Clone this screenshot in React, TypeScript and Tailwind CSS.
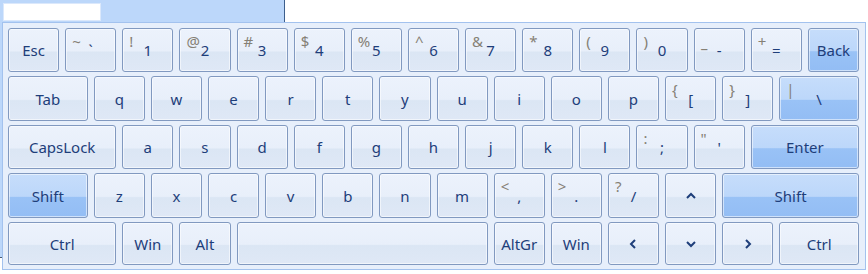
import type { ReactNode } from 'react'

type KeyDef = {
  label?: ReactNode
  shift?: string
  span?: number
  hot?: boolean
  shiftClass?: string
}

const Chevron = ({ dir }: { dir: 'up' | 'down' | 'left' | 'right' }) => {
  const paths = {
    up: 'M1 6 L5 2 L9 6',
    down: 'M1 2 L5 6 L9 2',
    left: 'M6 1 L2 5 L6 9',
    right: 'M2 1 L6 5 L2 9',
  }
  const vertical = dir === 'up' || dir === 'down'
  return (
    <svg
      width={vertical ? 10 : 8}
      height={vertical ? 8 : 10}
      viewBox={vertical ? '0 0 10 8' : '0 0 8 10'}
      fill="none"
      stroke="#1e3e7a"
      strokeWidth="2"
      strokeLinecap="butt"
      strokeLinejoin="miter"
    >
      <path d={paths[dir]} />
    </svg>
  )
}

const rows: KeyDef[][] = [
  [
    { label: 'Esc', span: 2 },
    { label: '`', shift: '~', span: 2 },
    { label: '1', shift: '!', span: 2 },
    { label: '2', shift: '@', span: 2 },
    { label: '3', shift: '#', span: 2 },
    { label: '4', shift: '$', span: 2 },
    { label: '5', shift: '%', span: 2 },
    { label: '6', shift: '^', span: 2 },
    { label: '7', shift: '&', span: 2 },
    { label: '8', shift: '*', span: 2 },
    { label: '9', shift: '(', span: 2 },
    { label: '0', shift: ')', span: 2 },
    { label: '-', shift: '–', span: 2, shiftClass: 'top-[9px]' },
    { label: '=', shift: '+', span: 2 },
    { label: 'Back', span: 2, hot: true },
  ],
  [
    { label: 'Tab', span: 3 },
    ...'qwertyuiop'.split('').map((c) => ({ label: c, span: 2 })),
    { label: '[', shift: '{', span: 2 },
    { label: ']', shift: '}', span: 2 },
    { label: '\\', shift: '|', span: 3, hot: true },
  ],
  [
    { label: 'CapsLock', span: 4 },
    ...'asdfghjkl'.split('').map((c) => ({ label: c, span: 2 })),
    { label: ';', shift: ':', span: 2 },
    { label: "'", shift: '"', span: 2 },
    { label: 'Enter', span: 4, hot: true },
  ],
  [
    { label: 'Shift', span: 3, hot: true },
    ...'zxcvbnm'.split('').map((c) => ({ label: c, span: 2 })),
    { label: ',', shift: '<', span: 2 },
    { label: '.', shift: '>', span: 2 },
    { label: '/', shift: '?', span: 2 },
    { label: <Chevron dir="up" />, span: 2 },
    { label: 'Shift', span: 5, hot: true },
  ],
  [
    { label: 'Ctrl', span: 4 },
    { label: 'Win', span: 2 },
    { label: 'Alt', span: 2 },
    { label: '', span: 9 },
    { label: 'AltGr', span: 2 },
    { label: 'Win', span: 2 },
    { label: <Chevron dir="left" />, span: 2 },
    { label: <Chevron dir="down" />, span: 2 },
    { label: <Chevron dir="right" />, span: 2 },
    { label: 'Ctrl', span: 3 },
  ],
]

const spanClass: Record<number, string> = {
  2: 'col-span-2',
  3: 'col-span-3',
  4: 'col-span-4',
  5: 'col-span-5',
  9: 'col-span-9',
}

const Key = ({ k }: { k: KeyDef }) => {
  const bg = k.hot
    ? 'bg-[linear-gradient(to_bottom,#c6ddfb_0%,#bcd7fa_52%,#99c2f6_54%,#93bdf4_100%)]'
    : 'bg-[linear-gradient(to_bottom,#ecf2fc_0%,#e8effa_52%,#dbe6f4_55%,#dfe8f6_100%)]'
  return (
    <div
      className={`relative flex items-center justify-center rounded-[3px] border border-[#8199c0] shadow-[inset_0_0_0_1px_rgba(255,255,255,0.55)] ${bg} ${
        spanClass[k.span ?? 2]
      }`}
    >
      {k.shift && (
        <span
          className={`absolute left-[6px] text-[15px] leading-[20px] text-[#858075] ${k.shiftClass ?? 'top-[2px]'}`}
        >
          {k.shift}
        </span>
      )}
      <span className="text-[15px] leading-[20px] text-[#1e3e7a]">{k.label}</span>
    </div>
  )
}

export default function App() {
  return (
    <div className="h-[274px] w-[868px] overflow-hidden bg-white font-['Noto_Sans','Open_Sans',sans-serif]">
      <div className="flex h-[22px]">
        <div className="flex h-[22px] w-[284px] items-start bg-[#bcd7fa] pt-[3px] pl-[3px]">
          <div className="h-[18px] w-[98px] border border-[#dbe8fb] bg-white" />
        </div>
        <div className="h-[22px] w-px bg-[#3d5e8c]" />
      </div>
      <div className="flex">
        <div className="flex w-[2px] flex-col">
          <div className="h-[235px] bg-[#bcd7fa]" />
          <div className="h-px bg-[#4a5a70]" />
        </div>
        <div className="h-[248px] w-[864px] border border-[#a3c2ee] bg-[#e7effb] pt-[5px] pr-[6px] pb-[4px] pl-[5px]">
          <div className="grid grid-cols-[repeat(30,minmax(0,1fr))] grid-rows-[44px_45px_44px_45px_43px] gap-x-[6px] gap-y-[4px]">
            {rows.map((row, i) => row.map((k, j) => <Key key={`${i}-${j}`} k={k} />))}
          </div>
        </div>
      </div>
    </div>
  )
}
